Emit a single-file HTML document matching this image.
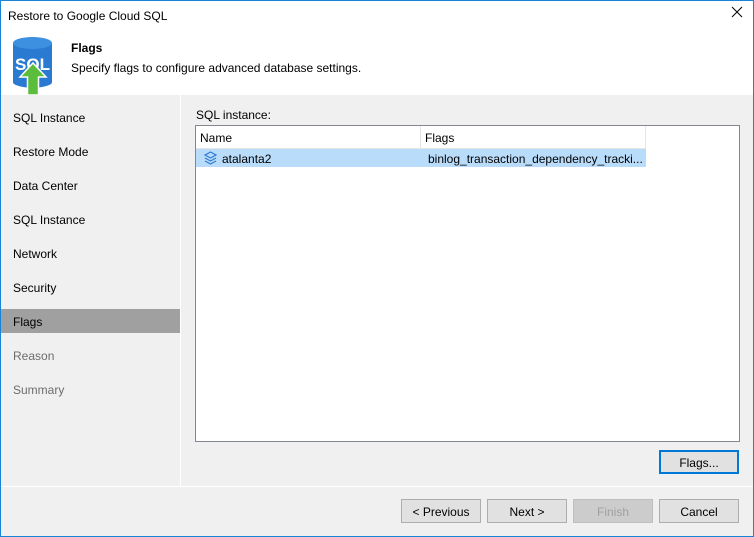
<!DOCTYPE html>
<html><head><meta charset="utf-8"><style>
*{box-sizing:border-box;margin:0;padding:0}
body{width:754px;height:537px;overflow:hidden;font-family:"Liberation Sans",sans-serif;font-size:12px;color:#000;background:#f0f0f0;position:relative}
.frame{position:absolute;left:0;top:0;width:754px;height:537px;border:1px solid #1883d7;pointer-events:none;z-index:5}
.title{position:absolute;left:0;top:0;width:754px;height:31px;background:#fff}
.title span{position:absolute;left:8px;top:9px;font-size:12px}
.close{position:absolute;left:731px;top:6px}
.header{position:absolute;left:0;top:31px;width:754px;height:64px;background:#fff}
.h1{position:absolute;left:71px;top:10px;font-weight:bold;font-size:12px}
.h2{position:absolute;left:71px;top:30px;font-size:12px}
.nav{position:absolute;left:0;top:95px;width:181px;height:391px;border-right:1px solid #fff}
.nav div{position:absolute;left:0;width:180px;height:24px;padding-left:13px;line-height:26px;font-size:12px}
.nav .sel{background:#a0a0a0}
.nav .dis{color:#6d6d6d}
.lbl{position:absolute;left:196px;top:108px}
.table{position:absolute;left:195px;top:125px;width:545px;height:317px;background:#fff;border:1px solid #828790}
.th{position:absolute;top:0;height:23px;line-height:25px;padding-left:4px;border-right:1px solid #e5e5e5;border-bottom:1px solid #e5e5e5;background:#fff}
.row{position:absolute;left:0;top:23px;width:450px;height:18px;background:#b9dcfa}
.btn{position:absolute;height:24px;width:80px;border:1px solid #adadad;background:#e1e1e1;text-align:center;line-height:24px;font-size:12px}
.sep{position:absolute;left:0;top:486px;width:754px;height:1px;background:#fff}
</style></head><body>
<div class="title"><span>Restore to Google Cloud SQL</span>
<svg class="close" width="12" height="12" viewBox="0 0 12 12"><path d="M1 1L11 11M11 1L1 11" stroke="#000" stroke-width="1"/></svg></div>
<div class="header">
<svg style="position:absolute;left:12px;top:5px" width="42" height="59" viewBox="0 0 42 59">
<path d="M1 7 V47 A20 6 0 0 0 40 47 V7 Z" fill="#2a7ad2"/>
<ellipse cx="20.5" cy="7" rx="19.5" ry="6" fill="#3d8fe0"/>
<text x="20.5" y="34" text-anchor="middle" font-family="Liberation Sans" font-weight="bold" font-size="17" fill="#fff">SQL</text>
<path d="M21 27 L34 41 H26.5 V59 H15.5 V41 H8 Z" fill="#5bbd3b" stroke="#fff" stroke-width="1.5"/>
</svg>
<div class="h1">Flags</div>
<div class="h2">Specify flags to configure advanced database settings.</div>
</div>
<div class="nav">
<div style="top:10px">SQL Instance</div>
<div style="top:44px">Restore Mode</div>
<div style="top:78px">Data Center</div>
<div style="top:112px">SQL Instance</div>
<div style="top:146px">Network</div>
<div style="top:180px">Security</div>
<div class="sel" style="top:214px">Flags</div>
<div class="dis" style="top:248px">Reason</div>
<div class="dis" style="top:282px">Summary</div>
</div>
<div class="lbl">SQL instance:</div>
<div class="table">
<div class="th" style="left:0;width:225px">Name</div>
<div class="th" style="left:225px;width:225px">Flags</div>
<div class="row">
<svg style="position:absolute;left:8px;top:2px" width="13" height="14" viewBox="0 0 13 14"><path d="M6.5 1L12 4L6.5 7L1 4Z M1 7L6.5 10L12 7 M1 10L6.5 13L12 10" fill="none" stroke="#2a7ad2" stroke-width="1.1"/></svg>
<span style="position:absolute;left:26px;top:3px">atalanta2</span>
<span style="position:absolute;left:232px;top:3px">binlog_transaction_dependency_tracki...</span>
</div>
</div>
<div class="btn" style="left:659px;top:450px;border:2px solid #0078d7;line-height:22px">Flags...</div>
<div class="sep"></div>
<div class="btn" style="left:401px;top:499px">&lt; Previous</div>
<div class="btn" style="left:487px;top:499px">Next &gt;</div>
<div class="btn" style="left:573px;top:499px;color:#a0a0a0;background:#cccccc;border-color:#bfbfbf">Finish</div>
<div class="btn" style="left:659px;top:499px">Cancel</div>
<div class="frame"></div>
</body></html>
